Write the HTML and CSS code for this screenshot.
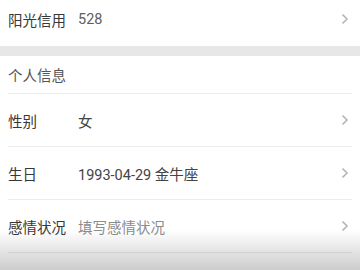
FILE: index.html
```html
<!DOCTYPE html>
<html>
<head>
<meta charset="utf-8">
<link rel="stylesheet" href="styles.css">
</head>
<body>
<div class="page">
  <div class="row row-top">
    <span class="label">阳光信用</span>
    <span class="value muted">528</span>
    <svg class="chev" width="8" height="12" viewBox="0 0 8 12"><polyline points="1.5,1.5 6,6 1.5,10.5" fill="none" stroke="#b4b4b4" stroke-width="1.6"/></svg>
  </div>
  <div class="gap"></div>
  <div class="section-title">个人信息</div>
  <div class="line"></div>
  <div class="row">
    <span class="label">性别</span>
    <span class="value">女</span>
    <svg class="chev" width="8" height="12" viewBox="0 0 8 12"><polyline points="1.5,1.5 6,6 1.5,10.5" fill="none" stroke="#b4b4b4" stroke-width="1.6"/></svg>
  </div>
  <div class="line"></div>
  <div class="row">
    <span class="label">生日</span>
    <span class="value">1993-04-29 金牛座</span>
    <svg class="chev" width="8" height="12" viewBox="0 0 8 12"><polyline points="1.5,1.5 6,6 1.5,10.5" fill="none" stroke="#b4b4b4" stroke-width="1.6"/></svg>
  </div>
  <div class="line"></div>
  <div class="row">
    <span class="label">感情状况</span>
    <span class="value placeholder">填写感情状况</span>
    <svg class="chev" width="8" height="12" viewBox="0 0 8 12"><polyline points="1.5,1.5 6,6 1.5,10.5" fill="none" stroke="#b4b4b4" stroke-width="1.6"/></svg>
  </div>
  <div class="line"></div>
  <div class="row"></div>
  <div class="shade"></div>
</div>
</body>
</html>
```

FILE: styles.css
```css
html, body {
  margin: 0;
  padding: 0;
  background: #ffffff;
}
.page {
  width: 360px;
  height: 270px;
  overflow: hidden;
  position: relative;
  font-family: Roboto, "Noto Sans CJK SC", sans-serif;
  font-size: 14.5px;
  color: #3a3a3a;
}
.row {
  height: 52px;
  display: flex;
  align-items: center;
  padding: 0 11px 0 8px;
}
.row-top {
  height: 38px;
  padding-bottom: 8px;
}
.label {
  width: 70px;
  flex: none;
  color: #383838;
}
.value {
  flex: 1;
  color: #444;
}
.value.muted {
  color: #606060;
}
.value.placeholder {
  color: #8c8c8c;
}
.chev {
  flex: none;
  display: block;
}
.gap {
  height: 10px;
  background: #e7e7e7;
}
.section-title {
  height: 37px;
  display: flex;
  align-items: center;
  padding-left: 8px;
  color: #555;
}
.line {
  height: 1px;
  margin: 0 8px;
  background: #ececec;
}
.shade {
  position: absolute;
  left: 0;
  right: 0;
  bottom: 0;
  height: 40px;
  background: linear-gradient(to bottom, rgba(0,0,0,0), rgba(0,0,0,0.2));
  pointer-events: none;
}
```
